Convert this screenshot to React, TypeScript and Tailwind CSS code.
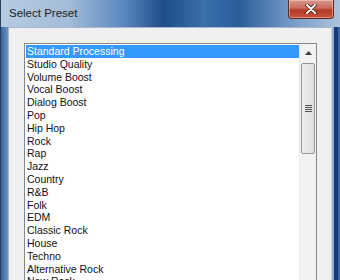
const presets = [
  "Standard Processing",
  "Studio Quality",
  "Volume Boost",
  "Vocal Boost",
  "Dialog Boost",
  "Pop",
  "Hip Hop",
  "Rock",
  "Rap",
  "Jazz",
  "Country",
  "R&B",
  "Folk",
  "EDM",
  "Classic Rock",
  "House",
  "Techno",
  "Alternative Rock",
  "New Rock",
  "Metal",
];

function CloseButton() {
  return (
    <div className="mr-[6px] w-[46px] h-[19px] rounded-b-[4px] border border-t-0 border-[#5a2a24] bg-[linear-gradient(to_bottom,#d99a8e_0%,#c96a5a_45%,#b23a26_55%,#c8513a_100%)] flex items-center justify-center shadow-[inset_0_0_0_1px_rgba(255,220,210,0.45)]">
      <svg width="12" height="10" viewBox="0 0 12 10">
        <path d="M2 1 L10 9 M10 1 L2 9" stroke="#3a1510" strokeWidth="3.4" strokeLinecap="round" />
        <path d="M2 1 L10 9 M10 1 L2 9" stroke="#ffffff" strokeWidth="2" strokeLinecap="round" />
      </svg>
    </div>
  );
}

function ScrollBar() {
  return (
    <div className="w-[17px] shrink-0 flex flex-col bg-[#f2f2f2] border-l border-[#e8e8e8]">
      <div className="h-[17px] flex items-center justify-center">
        <svg width="7" height="4" viewBox="0 0 7 4">
          <path d="M0 4 L3.5 0 L7 4 Z" fill="#404040" />
        </svg>
      </div>
      <div className="mt-[2px] mx-[1px] h-[91px] rounded-[2px] border border-[#979797] bg-[linear-gradient(to_right,#eeeeee,#dcdcdc)] flex flex-col items-center justify-center gap-[1px]">
        <div className="w-[7px] h-[1px] bg-[#555]" />
        <div className="w-[7px] h-[1px] bg-[#555]" />
        <div className="w-[7px] h-[1px] bg-[#555]" />
        <div className="w-[7px] h-[1px] bg-[#555]" />
      </div>
      <div className="flex-1" />
    </div>
  );
}

export default function App() {
  return (
    <div className="w-[340px] h-[280px] overflow-hidden flex flex-col bg-[linear-gradient(to_bottom,#a9bfd9_0px,#5f87b9_60px,#2e5b96_160px,#24508c_100%)] border-l border-[#2a3f5c]">
      <div className="h-[27px] shrink-0 flex justify-between bg-[linear-gradient(to_right,#b7cbe2_0%,#a3bcd8_20%,#5a88bf_36%,#1e4c8a_48%,#3b70ad_60%,#2a5c9a_70%,#7399c6_85%,#aec3dd_100%)]">
        <div className="pl-[8px] pt-[6px] text-[11.5px] leading-[15px] text-[#222] font-['Liberation_Sans',Arial,sans-serif]">
          Select Preset
        </div>
        <CloseButton />
      </div>
      <div className="flex-1 flex min-h-0">
        <div className="w-[7px] shrink-0 bg-[linear-gradient(to_right,#3c66a0,#6d92c2)]" />
        <div className="flex-1 bg-[#f0f0f0] border-l border-t border-[#a7b6c9] pl-[15px] pt-[15px] pr-[14px] min-h-0">
          <div className="h-[260px] bg-white border border-[#828790] flex font-['Liberation_Sans',Arial,sans-serif] text-[10.5px] text-[#111]">
            <div className="flex-1 pt-[1px] pl-[1px]">
              {presets.map((p, i) => (
                <div
                  key={p}
                  className={
                    i === 0
                      ? "h-[12.8px] leading-[12.8px] pl-[1px] bg-[#3399ff] text-white"
                      : "h-[12.8px] leading-[12.8px] pl-[1px]"
                  }
                >
                  {p}
                </div>
              ))}
            </div>
            <ScrollBar />
          </div>
        </div>
        <div className="w-[9px] shrink-0 flex border-l border-[#c8d4e2]">
          <div className="w-[2px] bg-[#8fb0d6]" />
          <div className="w-[4px] bg-[#17397a]" />
          <div className="flex-1 bg-[#3a66a6]" />
        </div>
      </div>
    </div>
  );
}
